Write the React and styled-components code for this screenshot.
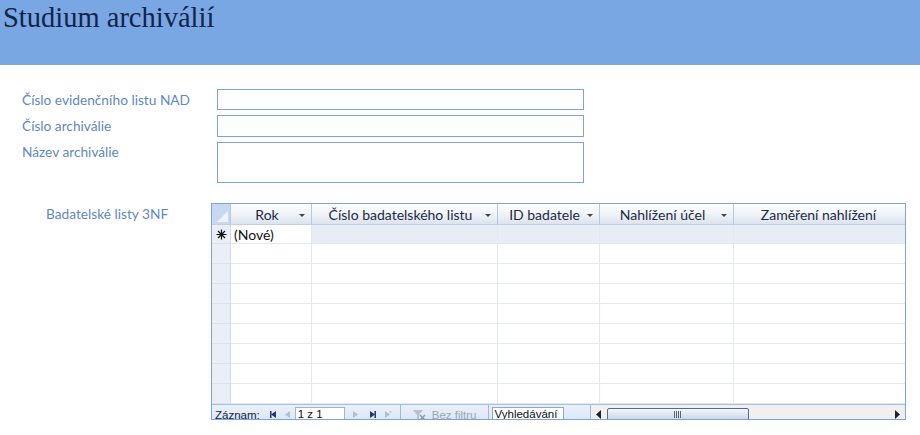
import React from "react";
import styled, { createGlobalStyle } from "styled-components";

const GlobalStyle = createGlobalStyle`
  html, body {
    margin: 0;
    padding: 0;
    background: #ffffff;
  }
  body {
    width: 920px;
    height: 435px;
    overflow: hidden;
    font-family: Lato, "Open Sans", sans-serif;
  }
`;

const Page = styled.div`
  width: 920px;
  height: 435px;
  background: #ffffff;
`;

const Header = styled.div`
  height: 65px;
  background: #79a7e3;
  padding: 1px 0 0 3px;
  box-sizing: border-box;
`;

const Title = styled.h1`
  margin: 0;
  font-family: "Liberation Serif", "DejaVu Serif", serif;
  font-weight: normal;
  font-size: 28.5px;
  line-height: 34px;
  color: #13234a;
`;

const Form = styled.div`
  display: grid;
  grid-template-columns: 195px 367px;
  row-gap: 5px;
  padding: 24px 0 0 22px;
`;

const Label = styled.div`
  font-size: 13.7px;
  color: #5f87c4;
  line-height: 16px;
  padding-top: ${(p) => p.$top || 3}px;
`;

const Field = styled.div`
  height: ${(p) => p.$h}px;
  border: 1px solid #7ba3de;
  box-sizing: border-box;
  background: #fff;
`;

const SubRow = styled.div`
  display: flex;
  padding: 20px 0 0 46px;
`;

const SubLabel = styled.div`
  width: 165px;
  font-size: 13.7px;
  color: #5f87c4;
  line-height: 16px;
  padding-top: 3px;
`;

const Grid = styled.div`
  width: 695px;
  height: 217px;
  border: 1px solid #7ba3de;
  box-sizing: border-box;
  display: flex;
  flex-direction: column;
  overflow: hidden;
`;

const Row = styled.div`
  display: flex;
  height: ${(p) => p.$h || 20}px;
  flex-shrink: 0;
`;

const Cell = styled.div`
  width: ${(p) => p.$w}px;
  flex-shrink: 0;
  box-sizing: border-box;
  border-right: 1px solid #e4e8f0;
  border-bottom: 1px solid #e4e8f0;
  background: ${(p) => p.$bg || "#fff"};
  font-size: 14px;
  color: #111;
  display: flex;
  align-items: center;
  padding-left: 3px;
`;

const Selector = styled.div`
  width: 19px;
  flex-shrink: 0;
  box-sizing: border-box;
  background: #e9eef7;
  border-right: 1px solid #d2dbea;
  border-bottom: 1px solid #dde3ee;
  display: flex;
  align-items: center;
  justify-content: center;
`;

const HeadCell = styled.div`
  width: ${(p) => p.$w}px;
  flex-shrink: 0;
  box-sizing: border-box;
  background: linear-gradient(#fdfeff 0%, #eef2f8 55%, #dce3ee 100%);
  border-right: 1px solid #b6c7e2;
  border-bottom: 1px solid #c3cfe2;
  display: flex;
  align-items: center;
  font-size: 14px;
  color: #1e2a40;
  padding: 0 6px 0 4px;
`;

const HeadText = styled.span`
  flex: 1;
  text-align: center;
  white-space: nowrap;
`;

const Arrow = styled.span`
  width: 0;
  height: 0;
  border-left: 3px solid transparent;
  border-right: 3px solid transparent;
  border-top: 3px solid #444;
  margin-top: 2px;
`;

const Corner = styled.div`
  width: 19px;
  flex-shrink: 0;
  box-sizing: border-box;
  background: #c8d8f0;
  border-right: 1px solid #b6c7e2;
  border-bottom: 1px solid #c3cfe2;
  display: flex;
  align-items: flex-end;
  justify-content: flex-end;
  padding: 0 2px 2px 0;
`;

const Filler = styled.div`
  flex: 1;
  display: flex;
  flex-direction: column;
`;

const NavBar = styled.div`
  height: 20px;
  flex-shrink: 0;
  display: flex;
  align-items: center;
  border-top: 1px solid #a9bfe0;
  background: linear-gradient(#e9f0fa, #d9e5f5);
  font-family: "Liberation Sans", "DejaVu Sans", sans-serif;
  font-size: 11.5px;
  color: #15223c;
  box-sizing: border-box;
`;

const NavLabel = styled.span`
  padding-left: 3px;
  margin-right: 6px;
`;

const NavIcon = styled.svg`
  width: 9px;
  height: 9px;
  margin: 0 ${(p) => p.$m ?? 3}px;
  flex-shrink: 0;
`;

const NavBox = styled.div`
  width: ${(p) => p.$w}px;
  height: 15px;
  border: 1px solid ${(p) => p.$bc || "#9fb5d6"};
  background: #fff;
  box-sizing: border-box;
  font-size: 11.5px;
  line-height: 13px;
  padding-left: 2px;
  margin: 0 ${(p) => p.$m ?? 4}px;
  flex-shrink: 0;
  color: #111;
  white-space: nowrap;
  overflow: hidden;
`;

const Sep = styled.div`
  width: 1px;
  align-self: stretch;
  background: #9fb8dc;
  margin-left: ${(p) => p.$l}px;
  margin-right: ${(p) => p.$r}px;
`;

const Disabled = styled.span`
  color: #a0a6b0;
  display: flex;
  align-items: center;
  gap: 6px;
`;

const ScrollArea = styled.div`
  flex: 1;
  display: flex;
  align-items: center;
  background: #f0f0f0;
  align-self: stretch;
  padding: 0 5px 0 5px;
`;

const Thumb = styled.div`
  width: 142px;
  height: 13px;
  box-sizing: border-box;
  border: 1px solid #556a8e;
  border-radius: 2px;
  background: linear-gradient(#f4f7fb, #c9d5e6);
  margin-left: 5px;
  display: flex;
  align-items: center;
  justify-content: center;
`;

const Track = styled.div`
  flex: 1;
`;

const columns = [
  { w: 81, title: "Rok", arrow: true },
  { w: 186, title: "Číslo badatelského listu", arrow: true },
  { w: 102, title: "ID badatele", arrow: true },
  { w: 134, title: "Nahlížení účel", arrow: true },
  { w: 172, title: "Zaměření nahlížení", arrow: false },
];

function Tri({ dir, color }) {
  const pts = dir === "left" ? "7,1 2,4.5 7,8" : "2,1 7,4.5 2,8";
  return <polygon points={pts} fill={color} />;
}

function App() {
  return (
    <Page>
      <GlobalStyle />
      <Header>
        <Title>Studium archiválií</Title>
      </Header>
      <Form>
        <Label>Číslo evidenčního listu NAD</Label>
        <Field $h={21} />
        <Label>Číslo archiválie</Label>
        <Field $h={22} />
        <Label $top={2}>Název archiválie</Label>
        <Field $h={41} />
      </Form>
      <SubRow>
        <SubLabel>Badatelské listy 3NF</SubLabel>
        <Grid>
          <Row $h={21}>
            <Corner>
              <svg width="11" height="11" viewBox="0 0 11 11">
                <polygon points="11,0 11,11 0,11" fill="#eef3fb" />
              </svg>
            </Corner>
            {columns.map((c) => (
              <HeadCell key={c.title} $w={c.w}>
                <HeadText>{c.title}</HeadText>
                {c.arrow && <Arrow />}
              </HeadCell>
            ))}
          </Row>
          <Row $h={19}>
            <Selector>
              <svg width="11" height="11" viewBox="0 0 11 11">
                <path
                  d="M5.5 0.5 V10.5 M0.5 5.5 H10.5 M2 2 L9 9 M9 2 L2 9"
                  stroke="#111"
                  strokeWidth="1.2"
                />
              </svg>
            </Selector>
            <Cell $w={81}>(Nové)</Cell>
            {columns.slice(1).map((c) => (
              <Cell key={c.title} $w={c.w} $bg="#e7ecf5" />
            ))}
          </Row>
          <Filler>
            {Array.from({ length: 8 }).map((_, i) => (
              <Row key={i}>
                <Selector />
                {columns.map((c) => (
                  <Cell key={c.title} $w={c.w} />
                ))}
              </Row>
            ))}
          </Filler>
          <NavBar>
            <NavLabel>Záznam:</NavLabel>
            <NavIcon viewBox="0 0 9 9">
              <rect x="1" y="1" width="1.5" height="7" fill="#1d3a78" />
              <Tri dir="left" color="#1d3a78" />
            </NavIcon>
            <NavIcon viewBox="0 0 9 9" $m={2}>
              <Tri dir="left" color="#b4bfd0" />
            </NavIcon>
            <NavBox $w={50} $m={1}>1 z 1</NavBox>
            <NavIcon viewBox="0 0 9 9" $m={5}>
              <Tri dir="right" color="#b4bfd0" />
            </NavIcon>
            <NavIcon viewBox="0 0 9 9" $m={3}>
              <Tri dir="right" color="#1d3a78" />
              <rect x="6.5" y="1" width="1.5" height="7" fill="#1d3a78" />
            </NavIcon>
            <NavIcon viewBox="0 0 9 9" $m={3}>
              <Tri dir="right" color="#b4bfd0" />
              <circle cx="7.5" cy="2" r="1.3" fill="#e8d890" />
            </NavIcon>
            <Sep $l={5} $r={11} />
            <Disabled>
              <svg width="14" height="12" viewBox="0 0 14 12">
                <polygon points="1,1 11,1 7,6 7,11 5,10 5,6" fill="#b9c0cb" />
                <path d="M8 6 L13 11 M13 6 L8 11" stroke="#8e98a8" strokeWidth="1.5" />
              </svg>
              Bez filtru
            </Disabled>
            <Sep $l={11} $r={3} />
            <NavBox $w={72} $bc="#8ea6cc" $m={0}>Vyhledávání</NavBox>
            <Sep $l={26} $r={0} />
            <ScrollArea>
              <svg width="6" height="9" viewBox="0 0 6 9">
                <polygon points="5,0 0,4.5 5,9" fill="#222" />
              </svg>
              <Thumb>
                <svg width="8" height="7" viewBox="0 0 8 7">
                  <path d="M0.5 0 V7 M2.5 0 V7 M4.5 0 V7 M6.5 0 V7" stroke="#5a6477" strokeWidth="1" />
                </svg>
              </Thumb>
              <Track />
              <svg width="6" height="9" viewBox="0 0 6 9">
                <polygon points="1,0 6,4.5 1,9" fill="#222" />
              </svg>
            </ScrollArea>
          </NavBar>
        </Grid>
      </SubRow>
    </Page>
  );
}

export default App;
